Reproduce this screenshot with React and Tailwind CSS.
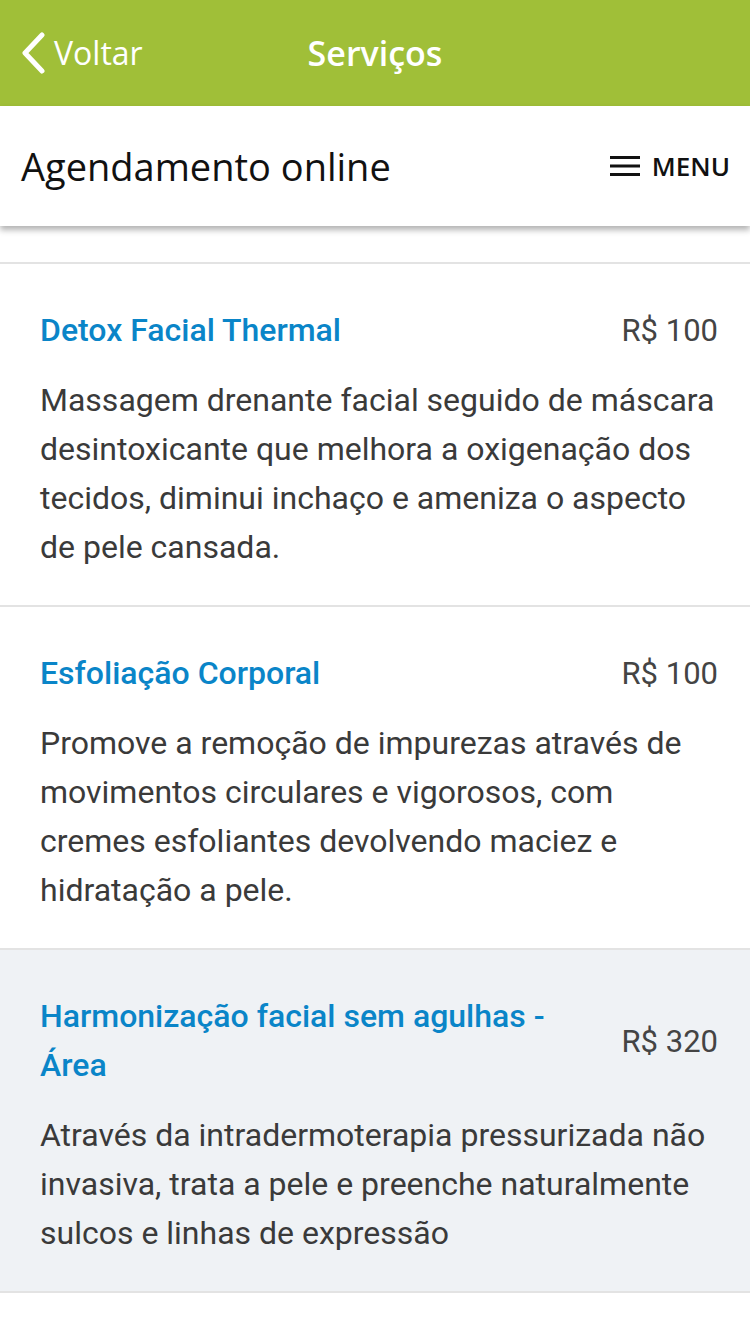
import React from 'react';

const services = [
    {
        name: 'Detox Facial Thermal',
        price: 'R$ 100',
        desc: 'Massagem drenante facial seguido de máscara desintoxicante que melhora a oxigenação dos tecidos, diminui inchaço e ameniza o aspecto de pele cansada.',
    },
    {
        name: 'Esfoliação Corporal',
        price: 'R$ 100',
        desc: 'Promove a remoção de impurezas através de movimentos circulares e vigorosos, com cremes esfoliantes devolvendo maciez e hidratação a pele.',
    },
    {
        name: 'Harmonização facial sem agulhas - Área',
        price: 'R$ 320',
        desc: 'Através da intradermoterapia pressurizada não invasiva, trata a pele e preenche naturalmente sulcos e linhas de expressão',
        active: true,
    },
];

export default function App() {
    return (
        <div className="min-h-[1334px] bg-white" style={{ fontFamily: 'Roboto, sans-serif' }}>
            {/* nav bar */}
            <div className="relative flex h-[106px] items-center bg-[#a0bf38] text-white" style={{ fontFamily: '"Open Sans", sans-serif' }}>
                <div className="flex items-center pl-[20px]">
                    <svg width="26" height="42" viewBox="0 0 26 42" fill="none">
                        <path d="M22 3 L5 21 L22 39" stroke="white" strokeWidth="5" strokeLinecap="round" strokeLinejoin="round" />
                    </svg>
                    <span className="ml-[8px] text-[32px] leading-none">Voltar</span>
                </div>
                <div className="pointer-events-none absolute left-0 right-0 text-center text-[34px] font-semibold leading-none">Serviços</div>
            </div>

            {/* sub header */}
            <div className="relative z-10 flex h-[120px] items-center justify-between bg-white pl-[21px] pr-[20px] shadow-[0_4px_6px_rgba(0,0,0,0.3)]" style={{ fontFamily: '"Open Sans", sans-serif' }}>
                <span className="text-[38px] text-[#111]">Agendamento online</span>
                <div className="flex items-center gap-[12px]">
                    <svg width="30" height="22" viewBox="0 0 30 22">
                        <rect x="0" y="1" width="30" height="3" fill="#111" />
                        <rect x="0" y="9.5" width="30" height="3" fill="#111" />
                        <rect x="0" y="18" width="30" height="3" fill="#111" />
                    </svg>
                    <span className="text-[26px] font-semibold text-[#111]">MENU</span>
                </div>
            </div>

            <div className="h-[36px]" />

            <div className="border-t-2 border-[#e3e3e3]">
                {services.map((s, i) => (
                    <div key={i} className={`border-b-2 border-[#e3e3e3] pl-[40px] pr-[32px] pt-[42px] pb-[33px] ${s.active ? 'bg-[#eff2f5]' : 'bg-white'}`}>
                        <div className="flex items-center justify-between gap-[40px]">
                            <div className="max-w-[540px] text-[32px] font-medium leading-[49px] text-[#0a85c8]">{s.name}</div>
                            <div className="shrink-0 text-[31px] leading-[49px] text-[#444]">{s.price}</div>
                        </div>
                        <p className="mt-[21px] text-[32px] leading-[49px] text-[#3a3a3a]">{s.desc}</p>
                    </div>
                ))}
            </div>
        </div>
    );
}
